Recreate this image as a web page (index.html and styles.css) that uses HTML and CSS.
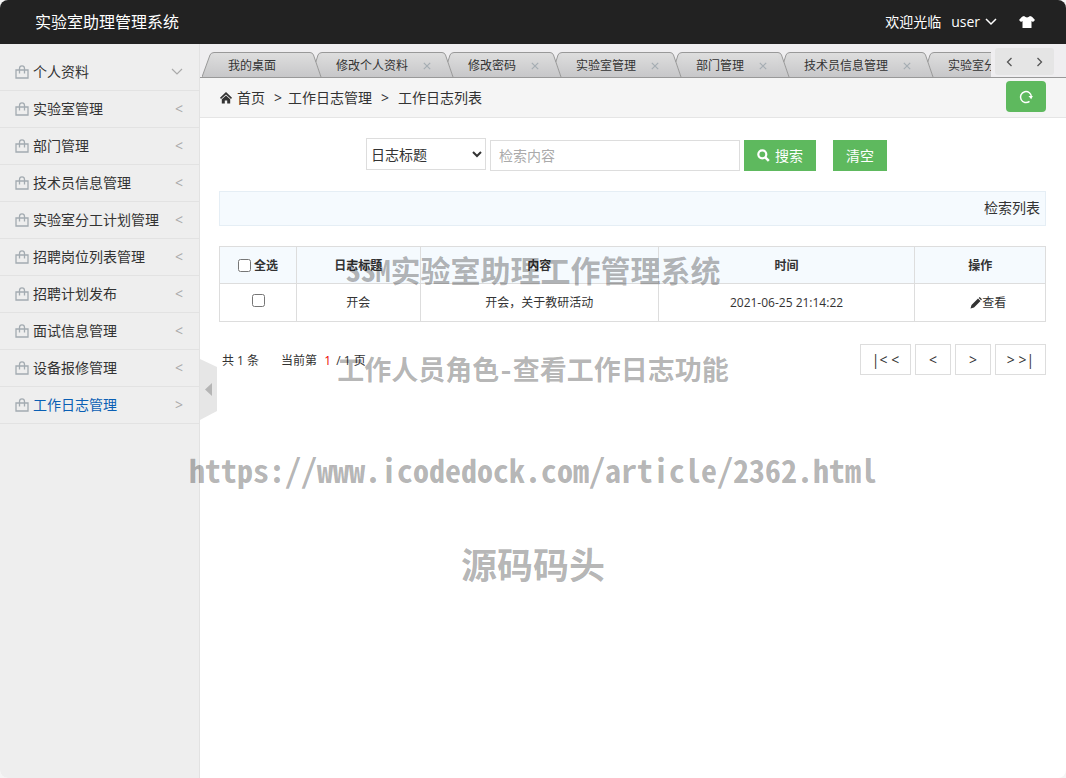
FILE: index.html
```html
<!DOCTYPE html>
<html lang="zh-CN">
<head>
<meta charset="utf-8">
<meta name="viewport" content="width=device-width, initial-scale=1">
<title>实验室助理管理系统</title>
<link rel="stylesheet" href="styles.css">
</head>
<body>
<svg class="defs" aria-hidden="true">
  <defs>
    <linearGradient id="tabfill" x1="0" y1="0" x2="0" y2="25" gradientUnits="userSpaceOnUse"><stop offset="0" stop-color="#dedede"/><stop offset="1" stop-color="#c7c7c9"/></linearGradient>
    <symbol id="bag" viewBox="0 0 14 14"><path d="M1 5h12v8H1zM4.500 8.500V3.600a2.500 2.700 0 0 1 5 0v4.900" fill="none" stroke="#a3abb1" stroke-width="1.300"/></symbol>
    <symbol id="joint" viewBox="0 0 12 25">
      <path d="M6 10L8 3Q9 .5 12 .5V25H11Z" fill="url(#tabfill)"/>
      <path d="M0 .5Q2.500 .5 3.500 3L11 25H0Z" fill="url(#tabfill)"/>
      <path d="M0 .5Q2.500 .5 3.500 3L11 25M5.800 10L8 3Q9 .5 12 .5" fill="none" stroke="#999"/>
    </symbol>
    <symbol id="cross" viewBox="0 0 8 8"><path d="M.8 .8l6.400 6.400M7.200 .8L.8 7.200" stroke="#a5adb3" stroke-width="1.200"/></symbol>
  </defs>
</svg>
<div class="app">
  <header class="topbar">
    <h1 class="brand">实验室助理管理系统</h1>
    <div class="account">
      <span>欢迎光临</span>
      <button class="user" type="button">user <svg width="12" height="8" viewBox="0 0 12 8"><path d="M1 1l5 5 5-5" fill="none" stroke="#fff" stroke-width="1.500"/></svg></button>
      <button class="skin" type="button" aria-label="换肤"><svg width="16" height="12" viewBox="0 0 16 12"><path d="M5 0Q8 2.800 11 0L13 .8 16 4l-2 2-1.500-1V12h-9V5L2 6 0 4 3 .8z" fill="#fff"/></svg></button>
    </div>
  </header>
  <div class="main">
    <nav class="sidebar">
      <a class="item" href="#"><svg class="bag"><use href="#bag"/></svg><span>个人资料</span><svg class="down" viewBox="0 0 12 8"><path d="M1 1l5 5 5-5" fill="none" stroke="#aaa" stroke-width="1.200"/></svg></a>
      <a class="item" href="#"><svg class="bag"><use href="#bag"/></svg><span>实验室管理</span><i>&lt;</i></a>
      <a class="item" href="#"><svg class="bag"><use href="#bag"/></svg><span>部门管理</span><i>&lt;</i></a>
      <a class="item" href="#"><svg class="bag"><use href="#bag"/></svg><span>技术员信息管理</span><i>&lt;</i></a>
      <a class="item" href="#"><svg class="bag"><use href="#bag"/></svg><span>实验室分工计划管理</span><i>&lt;</i></a>
      <a class="item" href="#"><svg class="bag"><use href="#bag"/></svg><span>招聘岗位列表管理</span><i>&lt;</i></a>
      <a class="item" href="#"><svg class="bag"><use href="#bag"/></svg><span>招聘计划发布</span><i>&lt;</i></a>
      <a class="item" href="#"><svg class="bag"><use href="#bag"/></svg><span>面试信息管理</span><i>&lt;</i></a>
      <a class="item" href="#"><svg class="bag"><use href="#bag"/></svg><span>设备报修管理</span><i>&lt;</i></a>
      <a class="item active" href="#"><svg class="bag"><use href="#bag"/></svg><span>工作日志管理</span><i>&gt;</i></a>
    </nav>
    <main class="page">
      <button class="collapse" type="button" aria-label="收起菜单"><svg width="17" height="61" viewBox="0 0 17 61"><path d="M0 0l17 8v44L0 61z" fill="#e6e6e6"/><path d="M12 24v13l-7-6.500z" fill="#b5b5b5"/></svg></button>
      <div class="tabbar">
        <div class="tabs">
          <svg class="cap" viewBox="0 0 12 25"><path d="M0 25L8 3Q9 .5 12 .5V25" fill="url(#tabfill)" stroke="none"/><path d="M0 25L8 3Q9 .5 12 .5" fill="none" stroke="#999"/></svg>
          <a class="tab" href="#">我的桌面</a><svg class="cap"><use href="#joint"/></svg>
          <a class="tab" href="#">修改个人资料<svg class="cross"><use href="#cross"/></svg></a><svg class="cap"><use href="#joint"/></svg>
          <a class="tab" href="#">修改密码<svg class="cross"><use href="#cross"/></svg></a><svg class="cap"><use href="#joint"/></svg>
          <a class="tab" href="#">实验室管理<svg class="cross"><use href="#cross"/></svg></a><svg class="cap"><use href="#joint"/></svg>
          <a class="tab" href="#">部门管理<svg class="cross"><use href="#cross"/></svg></a><svg class="cap"><use href="#joint"/></svg>
          <a class="tab" href="#">技术员信息管理<svg class="cross"><use href="#cross"/></svg></a><svg class="cap"><use href="#joint"/></svg>
          <a class="tab" href="#">实验室分工计划管理<svg class="cross"><use href="#cross"/></svg></a>
        </div>
        <div class="scroller">
          <button type="button" aria-label="向左"><svg width="7" height="10" viewBox="0 0 7 10"><path d="M5.500 1l-4 4 4 4" fill="none" stroke="#555" stroke-width="1.300"/></svg></button>
          <button type="button" aria-label="向右"><svg width="7" height="10" viewBox="0 0 7 10"><path d="M1.500 1l4 4-4 4" fill="none" stroke="#555" stroke-width="1.300"/></svg></button>
        </div>
      </div>
      <div class="crumbs">
        <svg width="12" height="12" viewBox="0 0 12 12"><path d="M6 0L12 5.800l-1 1.200-5-4.500L1 7 0 5.800z" fill="#333"/><path d="M1.800 7.200L6 3.500l4.200 3.700V11.500H7.200V8.500H4.800v3H1.800z" fill="#333"/></svg>
        <a href="#">首页</a><span class="sep">&gt;</span><a href="#">工作日志管理</a><span class="sep wide">&gt;</span><span>工作日志列表</span>
        <button class="refresh" type="button" aria-label="刷新"><svg width="14" height="14" viewBox="0 0 14 14"><path d="M10.500 11.300A5.500 5.500 0 1 1 12.500 7" fill="none" stroke="#fff" stroke-width="1.500"/><path d="M9.500 6h4.300l-1.600 3.200z" fill="#fff"/></svg></button>
      </div>
      <div class="content">
        <form class="search">
          <select aria-label="检索字段"><option>日志标题</option></select>
          <input type="text" aria-label="检索内容" placeholder="检索内容">
          <button type="button" class="green find"><svg width="13" height="13" viewBox="0 0 13 13"><circle cx="5.300" cy="5.300" r="4" fill="none" stroke="#fff" stroke-width="2.200"/><path d="M8.300 8.300l3.500 3.500" stroke="#fff" stroke-width="2.600"/></svg>搜索</button>
          <button type="reset" class="green clear">清空</button>
        </form>
        <div class="caption">检索列表</div>
        <table class="list">
          <colgroup><col class="c1"><col class="c2"><col class="c3"><col class="c4"><col class="c5"></colgroup>
          <thead><tr><th><label class="all"><input type="checkbox">全选</label></th><th>日志标题</th><th>内容</th><th>时间</th><th>操作</th></tr></thead>
          <tbody><tr><td><label class="pick"><input type="checkbox" aria-label="选择开会"></label></td><td>开会</td><td>开会，关于教研活动</td><td>2021-06-25 21:14:22</td><td><a class="view" href="#"><svg width="12" height="12" viewBox="0 0 12 12"><path d="M.5 11.500l1-3.500L8 1.500l2.500 2.500L4 10.500zM8.700 .9l1-.9L12 2.300l-.9 1z" fill="#333"/></svg>查看</a></td></tr></tbody>
        </table>
        <div class="pager">
          <div class="summary"><span>共 1 条</span><span>当前第 <b>1</b> / 1 页</span></div>
          <div class="buttons"><button class="end" type="button">|&lt; &lt;</button><button type="button">&lt;</button><button type="button">&gt;</button><button class="end" type="button">&gt; &gt;|</button></div>
        </div>
      </div>
    </main>
  </div>
  <div class="watermark">
    <p class="w1">SSM实验室助理工作管理系统</p>
    <p class="w2">工作人员角色-查看工作日志功能</p>
    <p class="w3">https://www.icodedock.com/article/2362.html</p>
    <p class="w4">源码码头</p>
  </div>
</div>
</body>
</html>
```
FILE: styles.css
```css
* { box-sizing: border-box; }
body {
  margin: 0;
  background: #f5f5f5;
  color: #333;
  font: 14px/20px "Open Sans", "Noto Sans CJK SC", sans-serif;
}
a { color: inherit; text-decoration: none; }
button, input, select { font: inherit; color: inherit; }
button { border: 0; padding: 0; background: none; }
svg { flex: none; }
.defs { position: absolute; width: 0; height: 0; }
.app {
  position: relative;
  display: flex;
  flex-direction: column;
  min-height: 100vh;
  background: #fff;
  border-radius: 8px;
  overflow: hidden;
}
.topbar {
  display: flex;
  align-items: center;
  justify-content: space-between;
  height: 44px;
  padding: 0 31px 0 35px;
  background: #222;
  color: #fff;
}
.brand { margin: 0; font-size: 16px; font-weight: 400; }
.account, .user { display: flex; align-items: center; }
.account { gap: 10px; }
.user { gap: 5px; }
.skin { display: flex; margin-left: 12px; }
.main { display: flex; flex: 1; }
.sidebar {
  flex: none;
  width: 200px;
  padding-top: 10px;
  background: #eee;
  border-right: 1px solid #e2e2e2;
}
.item {
  display: flex;
  align-items: center;
  height: 37px;
  padding: 0 16px 0 15px;
  border-bottom: 1px solid #e2e2e2;
}
.item span { flex: 1; }
.item i { color: #aaa; font-style: normal; }
.bag { width: 14px; height: 14px; margin-right: 4px; }
.down { width: 12px; height: 8px; }
.active { color: #0a5fb4; }
.page { position: relative; flex: 1; min-width: 0; }
.collapse { position: absolute; left: 0; top: 315px; display: flex; }
.tabbar {
  display: flex;
  align-items: flex-end;
  justify-content: space-between;
  height: 34px;
  border-bottom: 1px solid #999;
  background: #efeef0;
}
.tabs {
  display: flex;
  flex: 1;
  min-width: 0;
  padding-left: 2px;
  overflow: hidden;
  font-size: 12px;
}
.cap { width: 12px; height: 25px; }
.tab {
  display: flex;
  flex: none;
  align-items: center;
  gap: 15px;
  height: 25px;
  padding: 1px 11px 0 14px;
  border-top: 1px solid #999;
  background: linear-gradient(#dedede, #c7c7c9);
}
.tab:first-of-type { padding-right: 34px; }
.cross { width: 8px; height: 8px; }
.scroller {
  display: flex;
  flex: none;
  align-self: flex-start;
  align-items: center;
  justify-content: space-around;
  width: 59px;
  height: 27px;
  margin: 4px 12px 0 4px;
  border-radius: 3px;
  background: #e5e5e5;
}
.crumbs {
  display: flex;
  align-items: center;
  height: 40px;
  padding: 0 20px;
  border-bottom: 1px solid #e5e5e5;
  background: #f5f5f5;
}
.crumbs > svg { margin-right: 5px; }
.sep { margin: 0 6px 0 9px; }
.sep.wide { margin: 0 9px; }
.refresh {
  display: flex;
  align-items: center;
  justify-content: center;
  width: 40px;
  height: 31px;
  margin-left: auto;
  border-radius: 4px;
  background: #5eb95e;
}
.crumbs .refresh { align-self: flex-start; margin-top: 3px; }
.content { padding: 20px 20px 20px 19px; }
.search {
  display: flex;
  align-items: flex-end;
  justify-content: center;
  gap: 4px;
  height: 33px;
  padding-right: 12px;
}
.search select {
  align-self: flex-start;
  width: 120px;
  height: 32px;
  border: 1px solid #ddd;
  background: #fff;
}
.search input {
  width: 250px;
  height: 31px;
  padding: 0 8px;
  border: 1px solid #ddd;
}
.search input::placeholder { color: #aaa; }
.green {
  display: flex;
  align-items: center;
  justify-content: center;
  gap: 5px;
  height: 31px;
  background: #5eb95e;
  color: #fff;
}
.find { width: 72px; }
.clear { width: 54px; margin-left: 13px; }
.caption {
  margin: 20px 0;
  padding: 6px 5px 8px;
  border: 1px solid #e5eef5;
  background: #f5fafe;
  text-align: right;
  line-height: 19px;
}
.list {
  width: 100%;
  border-collapse: collapse;
  table-layout: fixed;
  font-size: 12px;
}
.c1 { width: 9.3%; }
.c2 { width: 15%; }
.c3 { width: 28.8%; }
.c4 { width: 31.1%; }
.c5 { width: 15.8%; }
.list th, .list td {
  height: 37px;
  padding: 0;
  border: 1px solid #ddd;
  text-align: center;
}
.list td { height: 38px; }
.list th { padding-top: 2px; background: #f5fafe; }
.list input { margin: 0; }
.all, .view, .pick { display: flex; align-items: center; justify-content: center; }
.all { gap: 3px; }
.all input { margin-bottom: 2px; }
.pick { padding: 0 0 4px 1px; }
.view { padding-left: 16px; }
.pager {
  display: flex;
  justify-content: space-between;
  margin-top: 22px;
}
.summary {
  display: flex;
  align-items: center;
  gap: 22px;
  padding: 2px 0 0 3px;
  font-size: 12px;
}
.summary b { margin: 0 2px 0 4px; color: #e00; font-weight: 400; }
.buttons { display: flex; gap: 4px; }
.buttons button { width: 36px; height: 31px; border: 1px solid #ddd; }
.buttons .end { width: 51px; }
.watermark {
  position: absolute;
  inset: 0;
  display: flex;
  flex-direction: column;
  align-items: center;
  padding-top: 219px;
  color: rgba(0, 0, 0, 0.3);
  font-family: "Noto Sans Mono CJK SC", "Liberation Mono", "Noto Sans CJK SC", monospace;
  font-weight: 700;
  white-space: nowrap;
  pointer-events: none;
}
.watermark p { margin: 0; line-height: 100px; }
.w1 { font-size: 30px; }
.w2 { font-size: 27px; }
.w3 { font-size: 32px; }
.watermark .w4 { font-size: 36px; line-height: 88px; }
```
